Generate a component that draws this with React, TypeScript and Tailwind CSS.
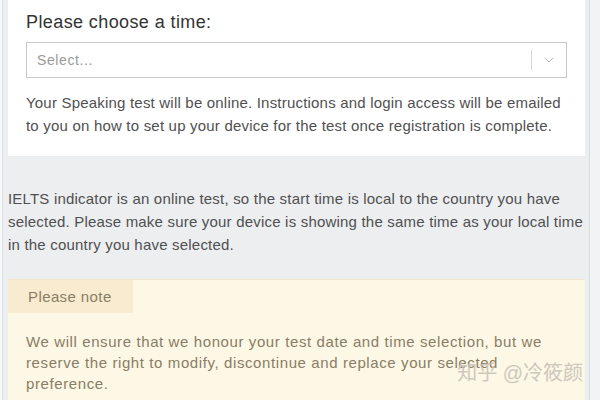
import { ChevronDown } from 'lucide-react';

export default function App() {
  return (
    <div
      className="flex h-[400px] w-[600px] overflow-hidden bg-[#eceef0] text-[15px] tracking-[0.6px]"
      style={{ fontFamily: '"Liberation Sans", Arial, "Noto Sans CJK SC", sans-serif' }}
    >
      <div className="w-[3px] shrink-0 border-r border-[#dcdfe2] bg-[#f7f8f9]" />
      <div className="flex w-[582px] shrink-0 flex-col pl-[5px]">
        <div className="bg-white px-[18px] pb-[19px] pt-[10px]">
          <h2 className="text-[18px] leading-[24px] tracking-[0.4px] text-[#333]">Please choose a time:</h2>
          <div className="mt-[8px] flex h-[36px] items-center border border-[#c8c8c8] pl-[10px]">
            <span className="flex-1 text-[14px] text-[#9a9a9a]">Select...</span>
            <span className="h-[20px] w-px bg-[#d6d6d6]" />
            <ChevronDown className="mx-[9px] h-[16px] w-[16px] text-[#b5b5b5]" strokeWidth={1.5} />
          </div>
          <p className="mt-[13px] leading-[23px] tracking-[0.2px] text-[#505050]">
            Your Speaking test will be online. Instructions and login access will be emailed to you on how to set up your device for the test once registration is complete.
          </p>
        </div>
        <p className="mt-[31px] leading-[23px] tracking-[0.2px] text-[#505050]">
          IELTS indicator is an online test, so the start time is local to the country you have selected. Please make sure your device is showing the same time as your local time in the country you have selected.
        </p>
        <div className="relative mt-[23px] flex-1 border-t border-[#f1e6cc] bg-[#fdf7e5]">
          <div className="w-[125px] bg-[#f8ebcf] px-[20px] py-[6px] text-[15px] leading-[21px] tracking-[0.4px] text-[#8a7d66]">
            Please note
          </div>
          <p className="mt-[18px] px-[18px] leading-[21px] text-[#8a7d66]">
            We will ensure that we honour your test date and time selection, but we reserve the right to modify, discontinue and replace your selected preference.
          </p>
          <span className="absolute bottom-[12px] right-[2px] text-[20px] tracking-normal text-[#c9c3b8] opacity-90">
            知乎 @冷筱颜
          </span>
        </div>
      </div>
      <div className="w-[4px] shrink-0" />
      <div className="w-[11px] shrink-0 border-l border-[#dadde0] bg-[#f1f3f4]" />
    </div>
  );
}
